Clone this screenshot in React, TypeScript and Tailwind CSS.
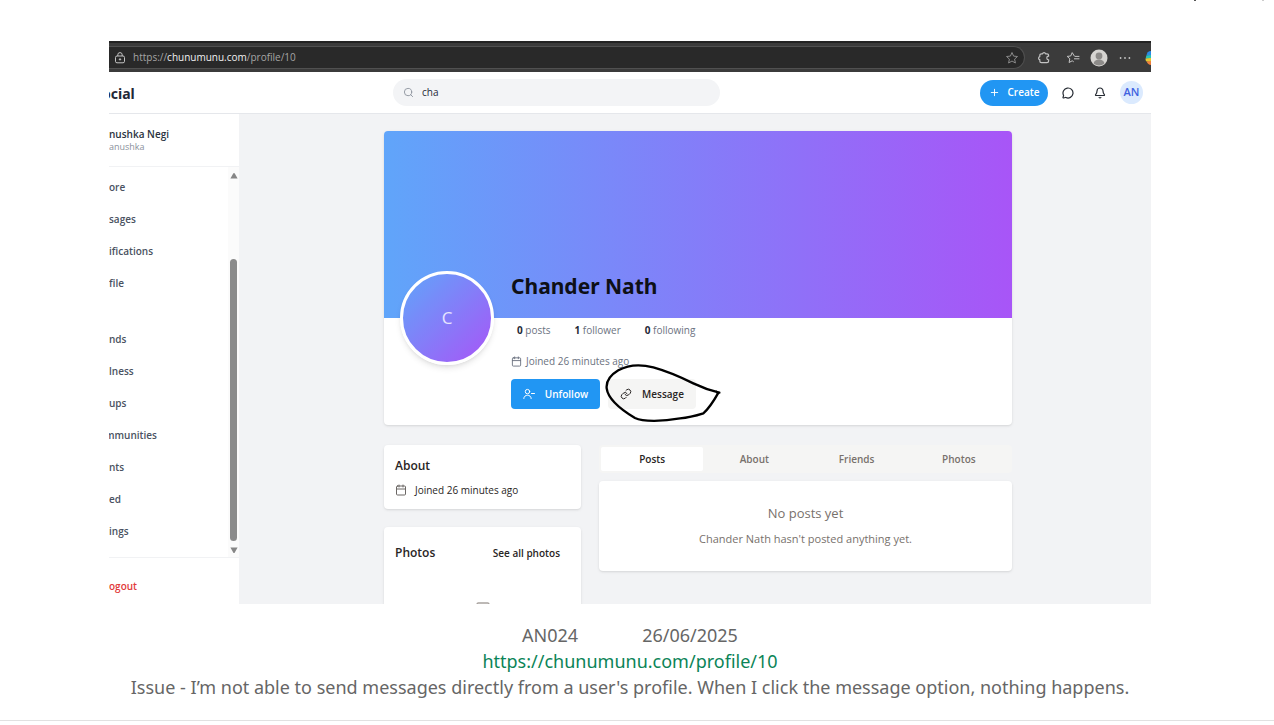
import React from "react";
import { Bell, Calendar, Image as ImageIcon, MessageCircle, Plus, Search } from "lucide-react";

type NavItem = { label: string; cut?: boolean };

const mainNav: NavItem[] = [
  { label: "ore" },
  { label: "sages" },
  { label: "ifications" },
  { label: "file" },
];

const moreNav: NavItem[] = [
  { label: "nds" },
  { label: "lness" },
  { label: "ups" },
  { label: "mmunities", cut: true },
  { label: "nts" },
  { label: "ed" },
  { label: "ings" },
];

const tabs = ["Posts", "About", "Friends", "Photos"];

function NavList({ items }: { items: NavItem[] }) {
  return (
    <ul>
      {items.map((item) => (
        <li key={item.label} className="flex h-8 items-center">
          <a href="#" className={item.cut ? "-ml-1" : ""}>
            {item.label}
          </a>
        </li>
      ))}
    </ul>
  );
}

function BrowserBar() {
  return (
    <div className="flex h-[31px] items-center border-t-2 border-[#232323] bg-[#3b3b3b] text-[#c4c4c4]">
      <div className="flex h-[23px] flex-1 items-center rounded-r-full border border-l-0 border-[#505050] bg-[#292929] px-[5px]">
        <svg viewBox="0 0 12 12" className="size-3" fill="none" stroke="currentColor">
          <rect x="1.5" y="4" width="9" height="6.8" rx="1.5" />
          <path d="M3.8 4V2.8a2.2 2.2 0 0 1 4.4 0V4" />
          <circle cx="6" cy="7.4" r="0.7" fill="currentColor" />
        </svg>
        <span className="ml-[7px] text-[10px] text-[#a5a5a5]">
          https://<span className="text-[#f0f0f0]">chunumunu.com</span>/profile/10
        </span>
        <svg viewBox="0 0 14 14" className="ml-auto size-3.5" fill="none" stroke="#8b8b8b">
          <path d="M7 1.5l1.6 3.6 3.9.4-2.9 2.6.8 3.9L7 10l-3.4 2 .8-3.9-2.9-2.6 3.9-.4z" strokeLinejoin="round" />
        </svg>
      </div>
      <div className="flex items-center pl-3">
        <svg viewBox="0 0 14 14" className="size-3.5" fill="none" stroke="currentColor" strokeWidth="1.2" strokeLinejoin="round">
          <path d="M11.6 5.2V4.4a1.6 1.6 0 0 0-1.6-1.600H8.600a1.600 1.600 0 0 0-3.100 0H4.400A1.600 1.600 0 0 0 2.800 4.400v1.200a1.600 1.600 0 0 0 0 3.100V10a1.600 1.600 0 0 0 1.600 1.600H10a1.600 1.600 0 0 0 1.600-1.600V8.800a1.800 1.800 0 1 1 0-3.600z" />
        </svg>
        <svg viewBox="0 0 14 14" className="ml-[15px] size-3.5" fill="none" stroke="currentColor" strokeLinejoin="round" strokeLinecap="round">
          <path d="M8.2 4.8L6.2 1.6 4.7 5l-3.5.4 2.6 2.4-.7 3.7L6.2 9.8l1.2.8M9 5.4h4M8.4 7.8H13" />
        </svg>
        <svg viewBox="0 0 18 18" className="ml-2.5 size-[18px]">
          <circle cx="9" cy="9" r="8.5" fill="#d6d4d1" />
          <circle cx="9" cy="7" r="3.4" fill="#8d8b89" />
          <path d="M3.6 14.6a5.4 4.2 0 0 1 10.8 0A8.5 8.5 0 0 1 3.6 14.6z" fill="#8d8b89" />
        </svg>
        <svg viewBox="0 0 12 4" className="ml-[11px] h-1 w-3" fill="currentColor">
          <circle cx="1.6" cy="2" r="0.9" />
          <circle cx="6" cy="2" r="0.9" />
          <circle cx="10.4" cy="2" r="0.9" />
        </svg>
        <svg viewBox="0 0 6 16" className="ml-3.5 h-4 w-1.5">
          <path d="M6 1C3 1 2 3 1.4 5.5L6 6z" fill="#2a8be8" />
          <path d="M1.4 5.5L.6 8.5 6 9V5z" fill="#2cc4b4" />
          <path d="M.6 8.5c-.2 1.5.2 2.5 1 3L6 12V8z" fill="#e6c832" />
          <path d="M1.6 11.5C2.5 13.5 4 15 6 15v-4z" fill="#f0803c" />
        </svg>
      </div>
    </div>
  );
}

function SiteHeader() {
  return (
    <header className="flex h-[42px] items-center border-b border-[#e5e7eb] bg-white pr-2">
      <div className="w-[284px] overflow-hidden">
        <span className="-ml-[7px] font-['Noto_Sans',sans-serif] text-[14px] font-bold text-[#1f2937]">ocial</span>
      </div>
      <label className="flex h-[27px] w-[327px] items-center gap-2 rounded-full bg-[#f3f4f6] px-2.5">
        <Search className="size-[11px] text-[#8d949e]" />
        <input
          type="text"
          aria-label="Search"
          defaultValue="cha"
          className="min-w-0 flex-1 bg-transparent text-[10px] text-[#1f2937] outline-none"
        />
      </label>
      <div className="ml-auto flex items-center">
        <button className="flex h-[26px] w-[68px] items-center justify-center gap-2 rounded-full bg-[#2196f3] text-[10px] font-semibold text-white">
          <Plus className="size-[11px]" />
          Create
        </button>
        <button aria-label="Messages" className="ml-3.5">
          <MessageCircle className="size-3 text-[#262b33]" strokeWidth={2.4} />
        </button>
        <button aria-label="Notifications" className="ml-5">
          <Bell className="size-3 text-[#262b33]" strokeWidth={2.4} />
        </button>
        <div className="ml-3.5 flex size-[23px] items-center justify-center rounded-full bg-[#dbeafe] text-[11px] font-semibold text-[#3f62e0]">
          AN
        </div>
      </div>
    </header>
  );
}

function Sidebar() {
  return (
    <aside className="flex w-[130px] flex-col overflow-hidden bg-white text-[10px] font-semibold text-[#4a5261]">
      <div className="flex h-[53px] flex-col justify-center border-b border-[#f1f2f4]">
        <div className="text-[10px] leading-[13px] text-[#2b3340]">nushka Negi</div>
        <div className="text-[9px] leading-3 font-normal text-[#8b919c]">anushka</div>
      </div>
      <div className="flex flex-1">
        <nav className="flex flex-1 flex-col gap-6 pt-1 pb-2.5">
          <NavList items={mainNav} />
          <NavList items={moreNav} />
        </nav>
        <div className="flex w-[11px] flex-col items-center bg-[#fbfbfb] pt-1.5 pb-1">
          <svg viewBox="0 0 8 6" className="h-1.5 w-2" fill="#868686">
            <path d="M3.2.6a1 1 0 0 1 1.6 0L7.6 5.5H.4z" />
          </svg>
          <div className="mt-20 w-[7px] flex-1 rounded-full bg-[#8b8b8b]" />
          <svg viewBox="0 0 8 6" className="mt-1.5 h-1.5 w-2" fill="#868686">
            <path d="M3.2 5.4a1 1 0 0 0 1.6 0L7.6.5H.4z" />
          </svg>
        </div>
      </div>
      <div className="flex h-[47px] items-center border-t border-[#f1f2f4] pt-2.5">
        <a href="#" className="text-[#e23b3b]">ogout</a>
      </div>
    </aside>
  );
}

function ProfileCard() {
  return (
    <section className="rounded bg-white shadow-sm">
      <div className="h-[187px] rounded-t bg-linear-to-r/srgb from-[#60a5fa] to-[#a855f7]" />
      <div className="relative -mt-[47px] flex gap-[17px] px-4 pb-4">
        <div className="flex size-[94px] shrink-0 items-center justify-center rounded-full border-3 border-white bg-linear-to-br/srgb from-[#60a5fa] to-[#a855f7] text-[17px] text-white/80 shadow-md">
          C
        </div>
        <div>
          <h1 className="font-['Noto_Sans',sans-serif] text-[21px] leading-[30px] font-bold text-[#0e1016]">Chander Nath</h1>
          <ul className="mt-[21px] ml-1.5 flex gap-6 text-[10px] leading-4 text-[#6b7280]">
            <li><b className="text-[#1f2937]">0</b> posts</li>
            <li><b className="text-[#1f2937]">1</b> follower</li>
            <li><b className="text-[#1f2937]">0</b> following</li>
          </ul>
          <p className="mt-[15px] flex items-center gap-1 text-[10px] leading-4 text-[#6b7280]">
            <Calendar className="size-[11px]" />
            Joined 26 minutes ago
          </p>
          <div className="mt-2.5 flex gap-2 text-[10px] font-semibold">
            <button className="flex h-[30px] w-[89px] items-center justify-center gap-2.5 rounded bg-[#2196f3] text-white">
              <svg viewBox="0 0 12 12" className="size-3" fill="none" stroke="currentColor" strokeLinecap="round">
                <circle cx="4.5" cy="3.6" r="2.2" />
                <path d="M.8 10.5c0-4.5 7.4-4.5 7.4 0M8.5 5.5h3" />
              </svg>
              Unfollow
            </button>
            <div className="relative">
              <button className="flex h-[30px] w-[88px] items-center justify-center gap-2.5 rounded bg-[#f5f5f4] text-[#292524]">
                <svg viewBox="0 0 24 24" className="size-3" fill="none" stroke="currentColor" strokeWidth="2" strokeLinecap="round">
                  <path d="M10 13a5 5 0 0 0 7.5.5l3-3a5 5 0 0 0-7-7l-1.7 1.7" />
                  <path d="M14 11a5 5 0 0 0-7.5-.5l-3 3a5 5 0 0 0 7 7l1.7-1.7" />
                </svg>
                Message
              </button>
              <svg
                viewBox="669 306 360 189"
                className="pointer-events-none absolute -top-[17px] -left-[5px] h-[63px] w-[120px]"
                fill="none"
                stroke="#000"
                strokeWidth="7"
                strokeLinecap="round"
                strokeLinejoin="round"
              >
                <path d="M1018 398C985 390 965 382 940 370C900 350 860 333 820 322C780 312 745 314 715 331C690 346 678 365 680 385C684 415 715 444 765 474C790 486 850 484 900 475C925 473 945 468 970 460C990 442 1000 425 1014 400L1009 395" />
              </svg>
            </div>
          </div>
        </div>
      </div>
    </section>
  );
}

function ProfileDetails() {
  return (
    <div className="flex flex-1 gap-[18px] pt-5">
      <div className="flex w-[197px] flex-col gap-[18px] text-[#292524]">
        <section className="rounded bg-white px-[11px] pt-[13px] pb-[11px] shadow-sm">
          <h2 className="text-[12px] leading-4 font-semibold">About</h2>
          <p className="mt-2 flex items-center gap-2 text-[10px] leading-4">
            <Calendar className="size-3 text-[#6b6764]" />
            Joined 26 minutes ago
          </p>
        </section>
        <section className="flex flex-1 flex-col justify-between rounded-t bg-white px-[11px] pt-[18px] shadow-sm">
          <div className="flex items-center justify-between pr-2.5">
            <h2 className="text-[12px] leading-4 font-semibold">Photos</h2>
            <a href="#" className="text-[10px] font-semibold">See all photos</a>
          </div>
          <div className="flex h-[3px] justify-center overflow-hidden">
            <ImageIcon className="size-4 shrink-0 text-[#a8a29e]" />
          </div>
        </section>
      </div>
      <div className="flex-1">
        <div role="tablist" className="grid grid-cols-4 rounded bg-[#f5f5f4] p-0.5 text-[10px] font-semibold text-[#78716c]">
          {tabs.map((tab, i) => (
            <button
              key={tab}
              role="tab"
              aria-selected={i === 0}
              className={i === 0 ? "h-6 rounded-xs bg-white text-[#292524]" : "h-6"}
            >
              {tab}
            </button>
          ))}
        </div>
        <section className="mt-2 rounded bg-white pt-[22px] pb-6 text-center text-[#78716c] shadow-sm">
          <h3 className="text-[13px] leading-5">No posts yet</h3>
          <p className="mt-2 text-[11px] leading-4">Chander Nath hasn't posted anything yet.</p>
        </section>
      </div>
    </div>
  );
}

export default function App() {
  return (
    <div className="relative bg-white font-['Open_Sans','Noto_Sans',sans-serif]">
      <div aria-hidden="true" className="absolute top-0 right-0 flex h-0.5 gap-[66px] pr-2.5">
        <span className="h-px w-0.5 bg-[#555]" />
        <span className="h-px w-0.5 bg-[#ccc]" />
      </div>
      <main className="mr-[123px] ml-[109px] pt-[41px] pb-5">
        <div className="overflow-hidden">
          <BrowserBar />
          <SiteHeader />
          <div className="flex">
            <Sidebar />
            <div className="flex flex-1 flex-col bg-[#f2f3f5] pt-[17px] pr-[139px] pl-[145px]">
              <ProfileCard />
              <ProfileDetails />
            </div>
          </div>
        </div>
        <div className="mt-[18px] text-center font-['Noto_Sans',sans-serif] text-[18px] leading-[26px] text-[#666]">
          <p className="flex justify-center gap-16">
            <span>AN024</span>
            <span>26/06/2025</span>
          </p>
          <p>
            <a href="https://chunumunu.com/profile/10" className="text-[#0b8457]">
              https://chunumunu.com/profile/10
            </a>
          </p>
          <p>
            Issue - I’m not able to send messages directly from a user's profile. When I click the message option, nothing happens.
          </p>
        </div>
      </main>
      <hr className="border-[#e1e1e1]" />
    </div>
  );
}
